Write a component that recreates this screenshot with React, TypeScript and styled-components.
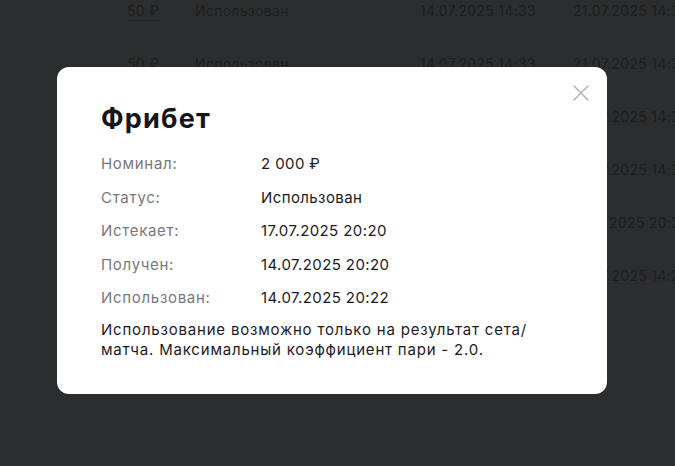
import React from 'react';
import styled, { createGlobalStyle } from 'styled-components';

const GlobalStyle = createGlobalStyle`
  html, body {
    margin: 0;
    padding: 0;
    background: #2c2d2e;
    font-family: Inter, "Noto Sans", sans-serif;
    overflow: hidden;
  }
`;

const Page = styled.div`
  width: 675px;
  height: 466px;
  position: relative;
  overflow: hidden;
  background: #2c2d2e;
`;

const Table = styled.div`
  display: flex;
  flex-direction: column;
`;

const TableRow = styled.div`
  display: grid;
  grid-template-columns: 127px 68px 225px 153px 1fr;
  align-items: center;
  height: 53px;
  margin-top: -16px;
  margin-bottom: 16px;
  font-size: 14px;
  letter-spacing: 0.3px;
  color: #1e1f20;
  white-space: nowrap;
`;

const Cell = styled.div`
  overflow: visible;
`;

const Amount = styled.span`
  border-bottom: 1px dotted #1e1f20;
  padding-bottom: 1px;
`;

const Overlay = styled.div`
  position: absolute;
  inset: 0;
  display: flex;
  align-items: flex-start;
  padding: 67px 0 0 57px;
`;

const Modal = styled.div`
  position: relative;
  width: 550px;
  box-sizing: border-box;
  background: #ffffff;
  border-radius: 12px;
  padding: 36px 44px 34px;
  color: #1b1b1f;
`;

const Title = styled.h2`
  margin: 0 0 19px;
  font-size: 27px;
  line-height: 32px;
  font-weight: 700;
  letter-spacing: 1.2px;
  color: #16161a;
`;

const Rows = styled.div`
  display: flex;
  flex-direction: column;
  gap: 13.5px;
`;

const InfoRow = styled.div`
  display: grid;
  grid-template-columns: 160px 1fr;
  font-size: 15px;
  line-height: 20px;
`;

const Label = styled.span`
  color: #77787d;
  letter-spacing: 0.7px;
`;

const Value = styled.span`
  color: #1b1b1f;
  letter-spacing: 0.4px;
`;

const Description = styled.p`
  margin: 12px 0 0;
  font-size: 15px;
  line-height: 20px;
  letter-spacing: 0.8px;
  color: #1b1b1f;
`;

const CloseButton = styled.button`
  position: absolute;
  top: 16px;
  right: 16px;
  width: 20px;
  height: 20px;
  padding: 0;
  border: none;
  background: none;
  cursor: pointer;
  display: flex;
  align-items: center;
  justify-content: center;
`;

const bgRows = [
  ['50 ₽', 'Использован', '14.07.2025 14:33', '21.07.2025 14:33'],
  ['50 ₽', 'Использован', '14.07.2025 14:33', '21.07.2025 14:33'],
  ['50 ₽', 'Использован', '14.07.2025 14:33', '21.07.2025 14:33'],
  ['50 ₽', 'Использован', '14.07.2025 14:33', '21.07.2025 14:33'],
  ['2 000 ₽', 'Использован', '14.07.2025 20:20', '17.07.2025 20:20'],
  ['50 ₽', 'Использован', '14.07.2025 14:25', '21.07.2025 14:25'],
];

const info = [
  ['Номинал:', '2 000 ₽'],
  ['Статус:', 'Использован'],
  ['Истекает:', '17.07.2025 20:20'],
  ['Получен:', '14.07.2025 20:20'],
  ['Использован:', '14.07.2025 20:22'],
];

export default function App() {
  return (
    <Page>
      <GlobalStyle />
      <Table>
        {bgRows.map((r, i) => (
          <TableRow key={i}>
            <Cell />
            <Cell><Amount>{r[0]}</Amount></Cell>
            <Cell>{r[1]}</Cell>
            <Cell>{r[2]}</Cell>
            <Cell>{r[3]}</Cell>
          </TableRow>
        ))}
      </Table>
      <Overlay>
        <Modal>
          <CloseButton aria-label="Закрыть">
            <svg width="18" height="18" viewBox="0 0 18 18" fill="none">
              <path d="M2 2L16 16M16 2L2 16" stroke="#b4b6bb" strokeWidth="1.6" strokeLinecap="round" />
            </svg>
          </CloseButton>
          <Title>Фрибет</Title>
          <Rows>
            {info.map(([l, v]) => (
              <InfoRow key={l}>
                <Label>{l}</Label>
                <Value>{v}</Value>
              </InfoRow>
            ))}
          </Rows>
          <Description>
            Использование возможно только на результат сета/ матча. Максимальный коэффициент пари - 2.0.
          </Description>
        </Modal>
      </Overlay>
    </Page>
  );
}
